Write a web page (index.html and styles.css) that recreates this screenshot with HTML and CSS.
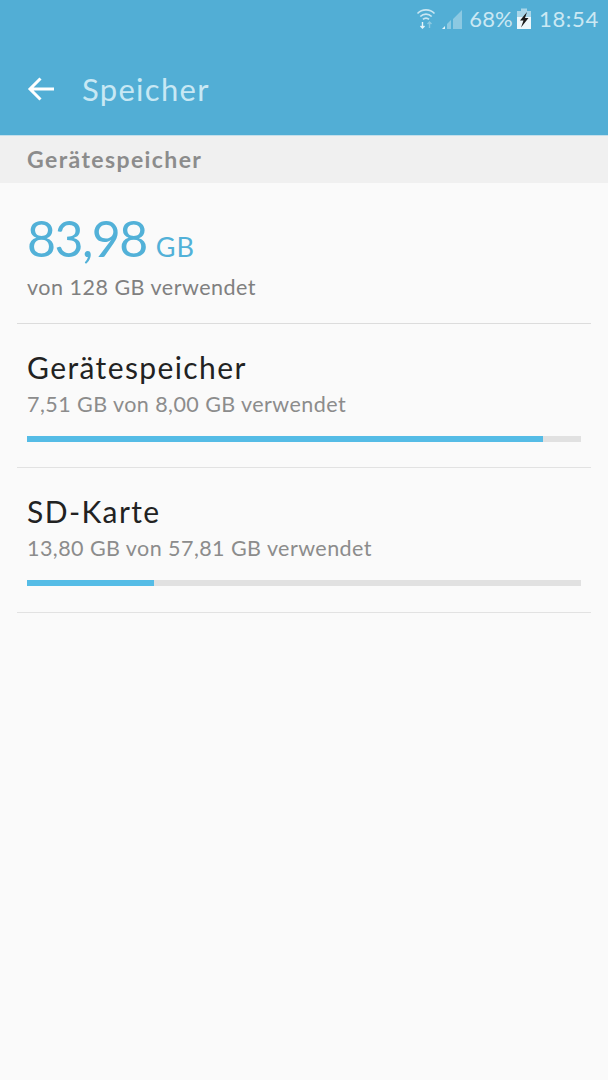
FILE: index.html
```html
<!DOCTYPE html>
<html lang="de">
<head>
<meta charset="utf-8">
<title>Speicher</title>
<link rel="stylesheet" href="styles.css">
</head>
<body>
<header class="appbar">
  <div class="status">
    <svg class="ic-wifi" width="20" height="24" viewBox="0 0 20 24" fill="none" stroke="#c9e6f2" stroke-width="1.7">
      <path d="M1.500 7.500a12 12 0 0 1 17 0"/>
      <path d="M4.300 10.500a8 8 0 0 1 11.400 0"/>
      <path d="M7 13.300a4.200 4.200 0 0 1 6 0"/>
      <path d="M6.500 16v6M4.500 20l2 2 2-2" stroke="#e6f4f9" stroke-width="1.400"/>
      <path d="M13.500 22v-6M11.500 18l2-2 2 2" stroke="#8cc9e2" stroke-width="1.400"/>
    </svg>
    <svg class="ic-signal" width="22" height="22" viewBox="0 0 22 22">
      <path d="M1 20h3v-3L1 20z" fill="#e6f4f9"/>
      <path d="M6 20h4v-9l-4 4v5zM12 20h9V1l-9 9v10z" fill="#8cc9e2"/>
    </svg>
    <span class="pct">68%</span>
    <svg class="ic-batt" width="16" height="22" viewBox="0 0 16 22">
      <rect x="5" y="0.500" width="6" height="2.500" fill="#a9d6e9"/>
      <rect x="1" y="3" width="14" height="18" fill="#eef7fb"/>
      <rect x="1" y="3" width="14" height="6" fill="#a9d6e9"/>
      <path d="M11 4 4 12.500h3.500L5 19.500l7.500-9.500H9L11 4z" fill="#1c1c1c"/>
    </svg>
    <span class="time">18:54</span>
  </div>
  <div class="titlebar">
    <svg class="ic-back" width="28" height="24" viewBox="0 0 28 24" fill="none" stroke="#fff" stroke-width="3">
      <path d="M27 12H3M13.500 1.500 3 12l10.500 10.500"/>
    </svg>
    <h1 class="title">Speicher</h1>
  </div>
</header>
<div class="section">Gerätespeicher</div>
<main class="list">
  <section class="summary">
    <div class="total"><span class="num">83,98</span><span class="unit">GB</span></div>
    <div class="of">von 128 GB verwendet</div>
  </section>
  <section class="item">
    <div class="name">Gerätespeicher</div>
    <div class="sub">7,51 GB von 8,00 GB verwendet</div>
    <div class="bar"><div class="fill" style="width:93.1%"></div></div>
  </section>
  <section class="item">
    <div class="name">SD-Karte</div>
    <div class="sub">13,80 GB von 57,81 GB verwendet</div>
    <div class="bar"><div class="fill" style="width:23%"></div></div>
  </section>
</main>
</body>
</html>
```
FILE: styles.css
```css
* { box-sizing: border-box; margin: 0; padding: 0; }
html, body { height: 100%; }
body {
  background: #fafafa;
  font-family: "Lato", "Open Sans", sans-serif;
  overflow: hidden;
}
.appbar {
  height: 136px;
  background: #52aed5;
  border-bottom: 1px solid #c4dfeb;
}
.status {
  height: 38px;
  display: flex;
  align-items: center;
  justify-content: flex-end;
  padding-right: 9px;
  color: #cbe8f3;
  font-size: 22px;
  line-height: 38px;
}
.ic-wifi { margin-right: 5px; margin-top: -2px; }
.ic-signal { margin-right: 6px; margin-top: 1px; }
.pct { margin-right: 3px; letter-spacing: 0.2px; }
.ic-batt { margin-right: 7px; }
.time { letter-spacing: 0.7px; }
.titlebar {
  height: 97px;
  display: flex;
  align-items: center;
  padding: 5px 0 0 27px;
}
.ic-back { margin-right: 27px; }
.title {
  font-size: 31px;
  font-weight: 400;
  color: #c8e8f4;
  letter-spacing: 1.300px;
  line-height: 40px;
}
.section {
  height: 47px;
  background: #f0f0f0;
  color: #8c8c8c;
  font-size: 23px;
  font-weight: 700;
  line-height: 47px;
  padding-left: 27px;
  letter-spacing: 1.400px;
}
.list { padding: 0 17px; }
.summary {
  height: 141px;
  padding: 23px 10px 0;
  border-bottom: 1px solid #dcdcdc;
}
.total { display: flex; align-items: baseline; height: 64px; margin-bottom: 2px; color: #52b1d8; }
.num { font-size: 50px; line-height: 64px; letter-spacing: -1.500px; }
.unit { font-size: 27px; margin-left: 9px; letter-spacing: 1px; }
.of { font-size: 21.500px; line-height: 30px; color: #808080; letter-spacing: 0.500px; }
.item {
  height: 144px;
  padding: 23px 10px 0;
  border-bottom: 1px solid #e2e2e2;
}
.item + .item { height: 145px; }
.name { font-size: 30px; line-height: 40px; color: #222; letter-spacing: 1.400px; }
.sub { font-size: 21.500px; line-height: 34px; color: #8c8c8c; letter-spacing: 0.440px; }
.bar { height: 6px; margin-top: 15px; background: #e1e1e1; }
.fill { height: 100%; background: #55bce6; }
```
